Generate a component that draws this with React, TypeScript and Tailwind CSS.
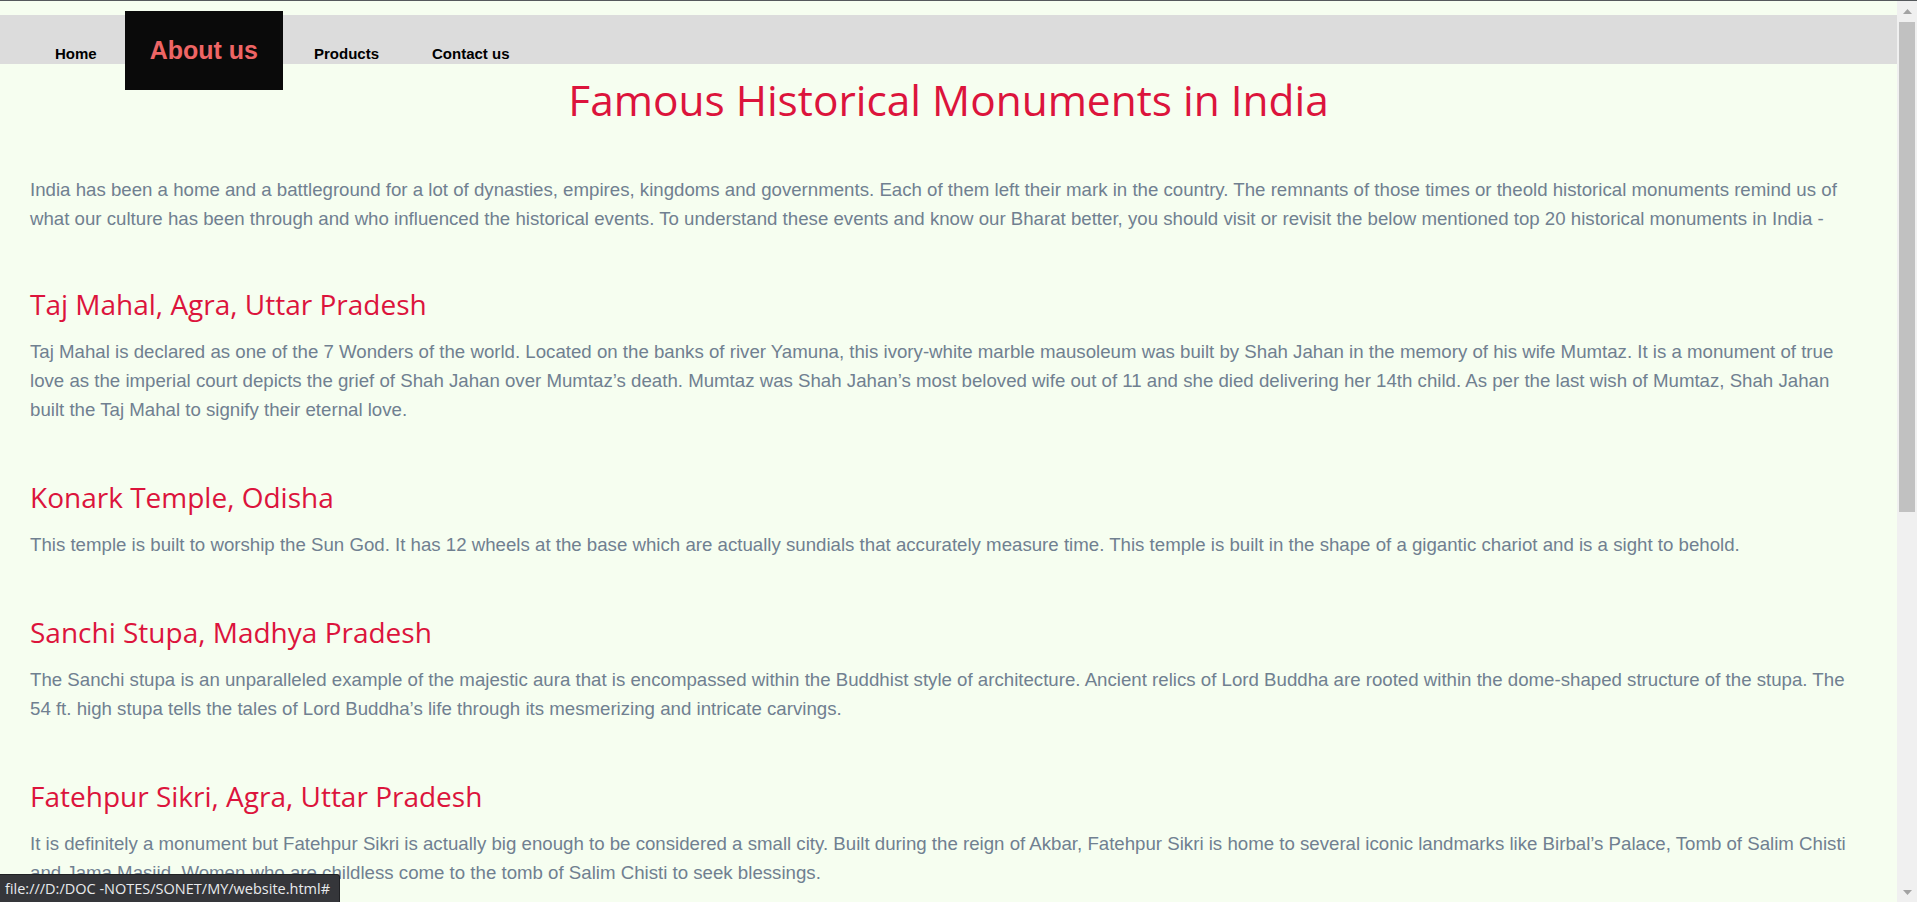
import React from "react";

const sections = [
  {
    title: "Taj Mahal, Agra, Uttar Pradesh",
    text: "Taj Mahal is declared as one of the 7 Wonders of the world. Located on the banks of river Yamuna, this ivory-white marble mausoleum was built by Shah Jahan in the memory of his wife Mumtaz. It is a monument of true love as the imperial court depicts the grief of Shah Jahan over Mumtaz’s death. Mumtaz was Shah Jahan’s most beloved wife out of 11 and she died delivering her 14th child. As per the last wish of Mumtaz, Shah Jahan built the Taj Mahal to signify their eternal love.",
  },
  {
    title: "Konark Temple, Odisha",
    text: "This temple is built to worship the Sun God. It has 12 wheels at the base which are actually sundials that accurately measure time. This temple is built in the shape of a gigantic chariot and is a sight to behold.",
  },
  {
    title: "Sanchi Stupa, Madhya Pradesh",
    text: "The Sanchi stupa is an unparalleled example of the majestic aura that is encompassed within the Buddhist style of architecture. Ancient relics of Lord Buddha are rooted within the dome-shaped structure of the stupa. The 54 ft. high stupa tells the tales of Lord Buddha’s life through its mesmerizing and intricate carvings.",
  },
  {
    title: "Fatehpur Sikri, Agra, Uttar Pradesh",
    text: "It is definitely a monument but Fatehpur Sikri is actually big enough to be considered a small city. Built during the reign of Akbar, Fatehpur Sikri is home to several iconic landmarks like Birbal’s Palace, Tomb of Salim Chisti and Jama Masjid. Women who are childless come to the tomb of Salim Chisti to seek blessings.",
  },
  {
    title: "Red Fort, Delhi",
    text: "The Red Fort is a historic fort in the city of Delhi that served as the main residence of the Mughal Emperors.",
  },
];

function Scrollbar() {
  return (
    <div className="w-[20px] shrink-0 bg-[#f0f0f0] flex flex-col items-center">
      {/* up arrow */}
      <div className="h-[21px] w-full flex items-center justify-center">
        <svg width="9" height="5" viewBox="0 0 9 5">
          <polygon points="4.5,0 9,5 0,5" fill="#a3a3a3" />
        </svg>
      </div>
      <div className="w-[16px] h-[490px] bg-[#c1c1c1]" />
      <div className="flex-1" />
      <div className="h-[20px] w-full flex items-center justify-center">
        <svg width="9" height="5" viewBox="0 0 9 5">
          <polygon points="0,0 9,0 4.5,5" fill="#a3a3a3" />
        </svg>
      </div>
    </div>
  );
}

export default function App() {
  return (
    <div className="relative h-[902px] overflow-hidden flex flex-col bg-[#f6fef0]">
      <div className="h-px bg-[#55595c] shrink-0" />
      <div className="flex flex-1 min-h-0">
        <main className="flex-1 min-w-0 overflow-hidden">
          {/* Nav */}
          <nav className="mt-[14px] h-[49px] bg-[#dcdcdc] flex items-baseline font-['Liberation_Sans',Arial,sans-serif] font-bold text-[15px] leading-[normal] text-black">
            <a href="#" className="pl-[55px] pr-[28px]">Home</a>
            <a href="#" className="-mt-[4px] p-[25px] bg-[#0a0a0a] text-[25px] leading-[normal] text-[#ee6565]">About us</a>
            <a href="#" className="pl-[31px] pr-[53px]">Products</a>
            <a href="#">Contact us</a>
          </nav>

          <div className="px-[30px]">
            <h1 className="mt-[8px] text-center font-['Open_Sans',sans-serif] text-[42.4px] leading-[56px] text-[#dc143c]">
              Famous Historical Monuments in India
            </h1>
            <p className="mt-[47px] font-['Liberation_Sans',Arial,sans-serif] text-[18.67px] leading-[29px] text-[#708090]">
              India has been a home and a battleground for a lot of dynasties, empires, kingdoms and governments. Each of them left their mark in the country. The remnants of those times or theold historical monuments remind us of what our culture has been through and who influenced the historical events. To understand these events and know our Bharat better, you should visit or revisit the below mentioned top 20 historical monuments in India -
            </p>

            {sections.map((s, i) => (
              <section key={s.title}>
                <h2
                  className={
                    i === 0
                      ? "mt-[53px] font-['Open_Sans',sans-serif] text-[28px] leading-[36px] text-[#dc143c]"
                      : "mt-[55px] font-['Open_Sans',sans-serif] text-[28px] leading-[36px] text-[#dc143c]"
                  }
                >
                  {s.title}
                </h2>
                <p className="mt-[15px] font-['Liberation_Sans',Arial,sans-serif] text-[18.67px] leading-[29px] text-[#708090]">
                  {s.text}
                </p>
              </section>
            ))}
          </div>
        </main>
        <Scrollbar />
      </div>

      {/* status bubble */}
      <div className="absolute left-0 bottom-0 h-[28px] pl-[5px] pr-[9px] flex items-center bg-[#35363a] border-t border-r border-[#202124] rounded-tr-[3px] font-['Open_Sans',sans-serif] text-[14.5px] text-[#e8eaed]">
        file:///D:/DOC -NOTES/SONET/MY/website.html#
      </div>
    </div>
  );
}
